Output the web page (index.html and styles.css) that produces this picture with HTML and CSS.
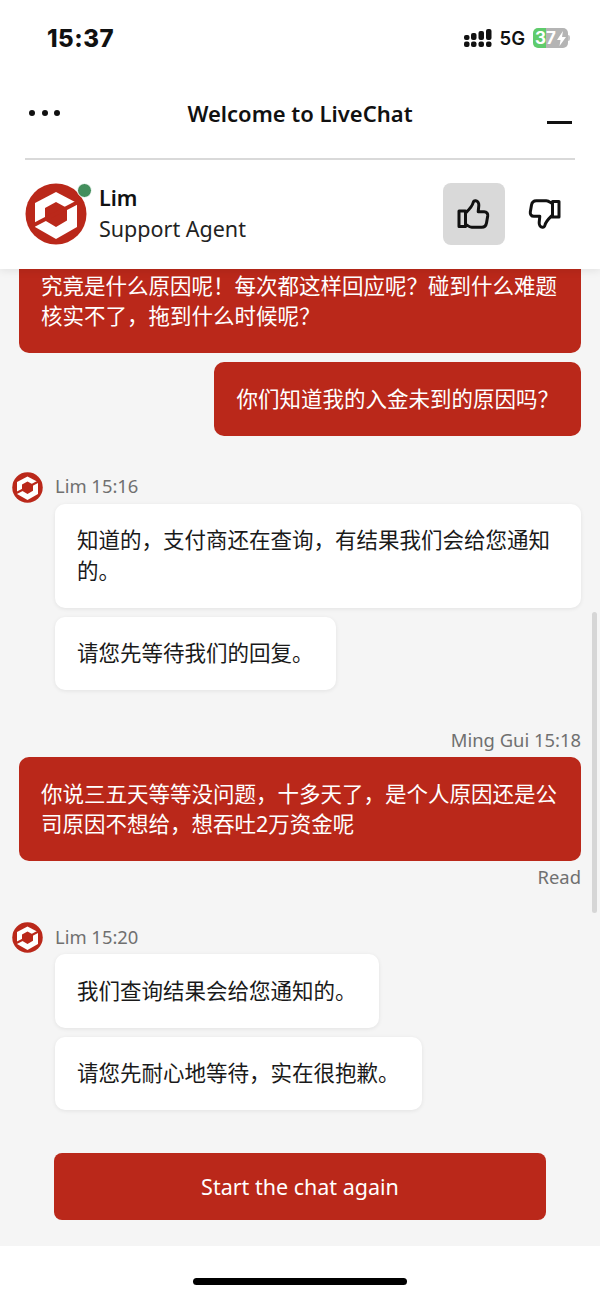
FILE: index.html
```html
<!DOCTYPE html>
<html lang="zh-CN">
<head>
  <meta charset="UTF-8" />
  <title>LiveChat</title>
  <link rel="stylesheet" href="styles.css">
</head>

<body>
  <svg class="defs" width="0" height="0">
    <symbol id="logo" viewBox="0 0 62 62">
      <circle cx="31" cy="31" r="30.5" fill="#ba281a" />
      <polygon points="31,9 52,20 52,44 31,56 10,44 10,20" fill="#fff" />
      <polygon points="31,19 42,25 42,37.500 31,44 20,37.500 20,25" fill="#ba281a" />
      <line x1="6" y1="43.500" x2="56" y2="17.500" stroke="#ba281a" stroke-width="4" />
    </symbol>
    <symbol id="thumb" viewBox="0 0 62 62">
      <path d="M16 28h6.500v15.500h-6.500z M22.500 30c3-3 6.500-6 7.500-10c.5-2 1.300-2.500 2.700-2.300c2.300.4 3.300 2.800 3.100 5l-.6 6h6c2.500 0 3.800 2 3.500 4.200l-1.200 7c-.5 2.800-2.200 4.300-4.800 4.300h-10c-2.500 0-4-1.700-5.700-2.700" fill="none" stroke="#111" stroke-width="3" stroke-linejoin="round" stroke-linecap="round" />
    </symbol>
  </svg>

  <div class="phone">
    <header class="top">
      <div class="status">
        <span class="clock">15:37</span>
        <div class="status-right">
          <svg class="signal" width="28" height="18" viewBox="0 0 28 18" fill="#111">
            <rect x="0" y="6" width="5.500" height="5" rx="2" />
            <rect x="0" y="12.500" width="5.500" height="5.500" rx="2" />
            <rect x="7" y="4" width="5.500" height="7" rx="2" />
            <rect x="7" y="12.500" width="5.500" height="5.500" rx="2" />
            <rect x="14.500" y="2" width="5.500" height="9" rx="2" />
            <rect x="14.500" y="12.500" width="5.500" height="5.500" rx="2" />
            <rect x="22" y="0" width="5.500" height="11" rx="2" />
            <rect x="22" y="12.500" width="5.500" height="5.500" rx="2" />
          </svg>
          <span class="net">5G</span>
          <div class="battery"><span class="battery-level">3</span><span class="battery-rest">7<svg width="9" height="15" viewBox="0 0 9 15"><path d="M6 0L0 9h3.500L2.500 15L9 6H5z" fill="#fff" /></svg></span></div>
        </div>
      </div>

      <div class="title-row">
        <div class="dots"><i></i><i></i><i></i></div>
        <h1>Welcome to LiveChat</h1>
        <div class="minimize"></div>
      </div>

      <div class="agent">
        <div class="agent-avatar">
          <svg width="62" height="62"><use href="#logo" /></svg>
          <span class="online"></span>
        </div>
        <div class="agent-info">
          <div class="agent-name">Lim</div>
          <div class="agent-role">Support Agent</div>
        </div>
        <button class="rate rate-on"><svg width="62" height="62"><use href="#thumb" /></svg></button>
        <button class="rate rate-down"><svg width="62" height="62"><use href="#thumb" /></svg></button>
      </div>
    </header>

    <main class="chat">
      <div class="scrollbar"></div>

      <section class="group group-me">
        <div class="bubble bubble-me">究竟是什么原因呢！每次都这样回应呢？碰到什么难题核实不了，拖到什么时候呢？</div>
        <div class="bubble bubble-me">你们知道我的入金未到的原因吗？</div>
      </section>

      <section class="group group-agent">
        <div class="meta-agent">
          <svg width="31" height="31"><use href="#logo" /></svg>
          <span class="meta">Lim 15:16</span>
        </div>
        <div class="bubble bubble-agent">知道的，支付商还在查询，有结果我们会给您通知的。</div>
        <div class="bubble bubble-agent">请您先等待我们的回复。</div>
      </section>

      <section class="group group-me">
        <div class="meta meta-me">Ming Gui 15:18</div>
        <div class="bubble bubble-me">你说三五天等等没问题，十多天了，是个人原因还是公司原因不想给，想吞吐2万资金呢</div>
        <div class="meta read">Read</div>
      </section>

      <section class="group group-agent">
        <div class="meta-agent">
          <svg width="31" height="31"><use href="#logo" /></svg>
          <span class="meta">Lim 15:20</span>
        </div>
        <div class="bubble bubble-agent">我们查询结果会给您通知的。</div>
        <div class="bubble bubble-agent">请您先耐心地等待，实在很抱歉。</div>
      </section>

      <button class="restart">Start the chat again</button>
    </main>

    <footer class="home"><div class="home-bar"></div></footer>
  </div>
</body>
</html>
```

FILE: styles.css
```css
* {
  box-sizing: border-box;
}

body {
  margin: 0;
  background: #fff;
  font-family: "Noto Sans", "Noto Sans CJK SC", sans-serif;
  color: #111;
}

.defs {
  display: none;
}

.phone {
  height: 1298px;
  display: flex;
  flex-direction: column;
}

.top {
  position: relative;
  z-index: 2;
  flex: none;
  background: #fff;
  box-shadow: 0 2px 8px rgba(0, 0, 0, 0.08);
}

.status {
  height: 70px;
  display: flex;
  justify-content: space-between;
  align-items: flex-start;
  padding: 23px 32px 0 47px;
}

.clock {
  font-family: Inter, sans-serif;
  font-size: 24px;
  line-height: 30px;
  font-weight: 800;
  letter-spacing: 0.5px;
  padding-top: 1px;
}

.status-right {
  display: flex;
  align-items: center;
  gap: 8px;
  height: 30px;
}

.signal {
  display: block;
}

.net {
  font-family: Inter, sans-serif;
  font-size: 18.500px;
  font-weight: 600;
}

.battery {
  position: relative;
  display: flex;
  width: 35px;
  height: 20px;
  font-family: Inter, sans-serif;
  font-size: 17px;
  line-height: 20px;
  font-weight: 700;
  color: #fff;
}

.battery::after {
  content: "";
  position: absolute;
  top: 7px;
  right: -2px;
  width: 2px;
  height: 6px;
  border-radius: 0 2px 2px 0;
  background: #c4c4c4;
}

.battery-level {
  width: 13px;
  padding-left: 2px;
  border-radius: 5px 0 0 5px;
  background: #5fcb6c;
}

.battery-rest {
  flex: 1;
  display: flex;
  align-items: center;
  gap: 1px;
  border-radius: 0 5px 5px 0;
  background: #b4b4b4;
}

.title-row {
  height: 90px;
  margin: 0 25px;
  padding-bottom: 2px;
  border-bottom: 2px solid #d9d9d9;
  display: flex;
  justify-content: space-between;
  align-items: center;
}

.title-row h1 {
  margin: 0;
  font-size: 22px;
  line-height: 30px;
  font-weight: 600;
}

.dots {
  display: flex;
  gap: 6.500px;
  padding-left: 4px;
  width: 100px;
}

.dots i {
  width: 6px;
  height: 6px;
  border-radius: 50%;
  background: #111;
}

.minimize {
  width: 100px;
  height: 3px;
  margin-top: 18px;
  border-right: 3px solid #fff;
  border-left: 72px solid #fff;
  background: #111;
}

.agent {
  height: 109px;
  padding: 23px 25px 0;
  display: flex;
  gap: 8px;
}

.agent-avatar {
  position: relative;
  width: 62px;
  height: 62px;
  margin-right: 4px;
}

.online {
  position: absolute;
  top: 0;
  right: -5px;
  width: 15px;
  height: 15px;
  border: 1px solid #fff;
  border-radius: 50%;
  background: #438e5c;
}

.agent-info {
  flex: 1;
}

.agent-name {
  font-size: 21.500px;
  line-height: 30px;
  font-weight: 600;
}

.agent-role {
  font-size: 21.500px;
  line-height: 32px;
  color: #222;
}

.rate {
  width: 62px;
  height: 62px;
  padding: 0;
  border: none;
  border-radius: 8px;
  background: none;
}

.rate svg {
  display: block;
}

.rate-on {
  background: #d9d9d9;
}

.rate-down svg {
  transform: rotate(180deg);
}

.chat {
  position: relative;
  flex: 1;
  min-height: 0;
  overflow: hidden;
  background: #f5f5f5;
  padding: 0 19px 26px;
  display: flex;
  flex-direction: column;
  justify-content: flex-end;
}

.scrollbar {
  position: absolute;
  top: 343px;
  right: 3px;
  width: 5px;
  height: 301px;
  border-radius: 3px;
  background: #d6d6d6;
}

.group {
  flex: none;
  display: flex;
  flex-direction: column;
  gap: 9px;
}

.group-me {
  align-items: flex-end;
  margin-top: 36px;
}

.group-me:first-of-type {
  margin-top: 0;
}

.group-agent {
  align-items: flex-start;
  padding-left: 36px;
  margin-top: 36px;
}

.bubble {
  padding: 21.500px 22px;
  border-radius: 10px;
  font-size: 21.500px;
  line-height: 30.500px;
}

.bubble-me {
  background: #ba281a;
  color: #fff;
}

.bubble-agent {
  background: #fff;
  color: #1a1a1a;
  box-shadow: 0 1px 4px rgba(0, 0, 0, 0.08);
}

.meta {
  font-size: 18.400px;
  line-height: 24px;
  color: #707070;
}

.meta-agent {
  display: flex;
  align-items: center;
  gap: 12px;
  height: 31px;
  margin: 0 0 -8px -43px;
}

.meta-agent svg {
  display: block;
}

.meta-agent .meta {
  padding-bottom: 2px;
}

.meta-me {
  line-height: 28px;
  margin-bottom: -6px;
}

.read {
  line-height: 19px;
  margin-top: -3px;
}

.restart {
  flex: none;
  width: 492px;
  height: 67px;
  margin: 43px 0 0 35px;
  border: none;
  border-radius: 8px;
  background: #ba281a;
  color: #fff;
  font-family: inherit;
  font-size: 21.500px;
}

.home {
  flex: none;
  height: 52px;
  background: #fff;
  padding-top: 32px;
}

.home-bar {
  width: 214px;
  height: 7px;
  margin: 0 auto;
  border-radius: 4px;
  background: #000;
}
```
